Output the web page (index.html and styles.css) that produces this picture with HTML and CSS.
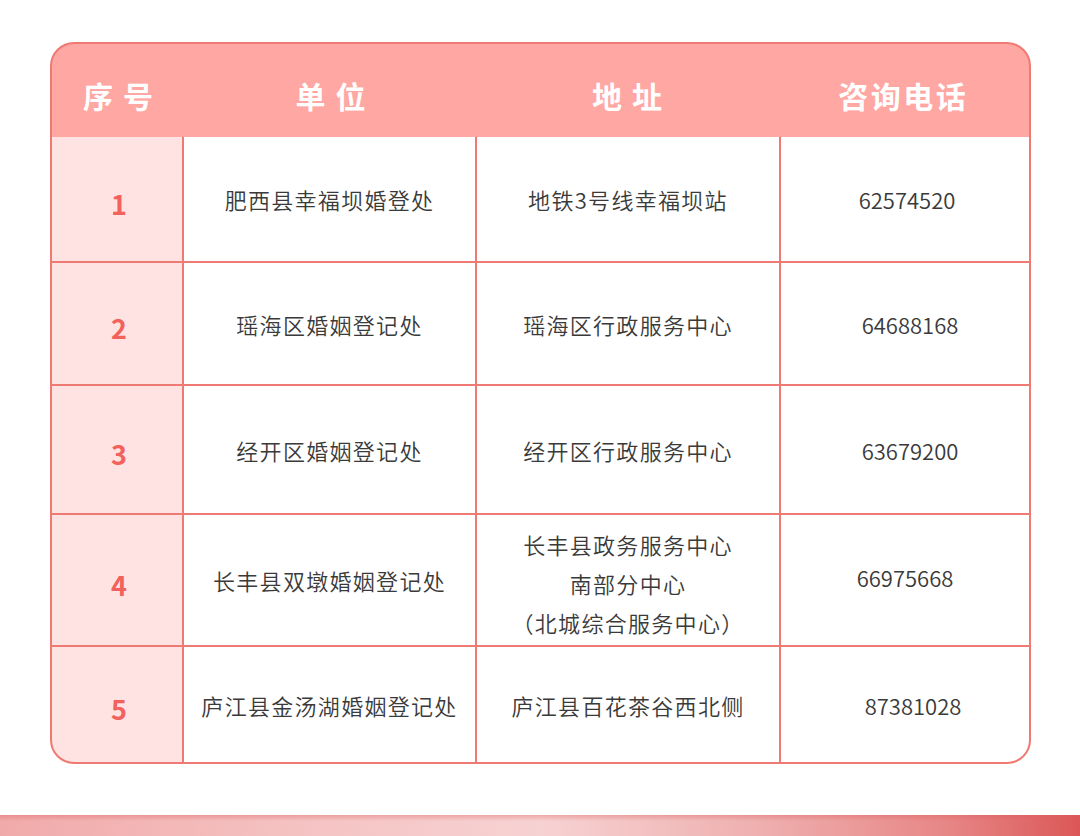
FILE: index.html
```html
<!DOCTYPE html>
<html lang="zh-CN">
<head>
<meta charset="utf-8">
<link rel="stylesheet" href="styles.css">
</head>
<body>
<div class="page">
  <div class="table">
    <div class="head">
      <div class="h c1"><span class="wide">序号</span></div>
      <div class="h c2"><span class="wide">单位</span></div>
      <div class="h c3"><span class="wide">地址</span></div>
      <div class="h c4"><span class="narrow">咨询电话</span></div>
    </div>
    <div class="body">
      <div class="cell num r1">1</div>
      <div class="cell r1">肥西县幸福坝婚登处</div>
      <div class="cell r1">地铁3号线幸福坝站</div>
      <div class="cell tel r1">62574520</div>

      <div class="cell num r2">2</div>
      <div class="cell r2">瑶海区婚姻登记处</div>
      <div class="cell r2">瑶海区行政服务中心</div>
      <div class="cell tel shift-r r2">64688168</div>

      <div class="cell num r3">3</div>
      <div class="cell r3">经开区婚姻登记处</div>
      <div class="cell r3">经开区行政服务中心</div>
      <div class="cell tel shift-r r3">63679200</div>

      <div class="cell num r4">4</div>
      <div class="cell r4">长丰县双墩婚姻登记处</div>
      <div class="cell r4 multi">长丰县政务服务中心<br>南部分中心<br>（北城综合服务中心）</div>
      <div class="cell tel up r4">66975668</div>

      <div class="cell num r5">5</div>
      <div class="cell r5">庐江县金汤湖婚姻登记处</div>
      <div class="cell r5">庐江县百花茶谷西北侧</div>
      <div class="cell tel shift-rr r5">87381028</div>
    </div>
  </div>
  <div class="strip"></div>
</div>
</body>
</html>
```
FILE: styles.css
```css
html, body {
  margin: 0;
  padding: 0;
  background: #ffffff;
}
.page {
  width: 1080px;
  height: 836px;
  position: relative;
  overflow: hidden;
  font-family: "Noto Sans CJK SC", "Noto Sans", sans-serif;
  padding-top: 42px;
  box-sizing: border-box;
}
.table {
  margin-left: 50px;
  width: 981px;
  box-sizing: border-box;
  border: 2px solid #ef7a73;
  border-radius: 24px;
  overflow: hidden;
  background: #ef7a73;
}
.head {
  display: grid;
  grid-template-columns: 132px 293px 304px 248px;
  height: 93px;
  background: #ffa7a3;
}
.h {
  display: flex;
  align-items: center;
  justify-content: center;
  color: #ffffff;
  font-weight: 700;
  font-size: 30px;
  padding-top: 8px;
  box-sizing: border-box;
}
.h.c3 {
  padding-right: 4px;
}
.h.c4 {
  padding-right: 6px;
}
.h .wide {
  letter-spacing: 10px;
  margin-right: -10px;
}
.h .narrow {
  letter-spacing: 2.5px;
  margin-right: -2.5px;
}
.body {
  display: grid;
  grid-template-columns: 130px 291px 302px 248px;
  grid-template-rows: 124px 121px 127px 130px 115px;
  column-gap: 2px;
  row-gap: 2px;
}
.cell {
  background: #ffffff;
  display: flex;
  align-items: center;
  justify-content: center;
  text-align: center;
  color: #3a3a3a;
  font-size: 22px;
  font-weight: 350;
  letter-spacing: 1.3px;
  box-sizing: border-box;
}
.cell.num {
  background: #ffe3e2;
  color: #f2615c;
  font-weight: 700;
  font-size: 27px;
  letter-spacing: 0;
  padding-top: 8px;
  padding-left: 4px;
}
.cell.tel {
  letter-spacing: 0;
  padding-left: 4px;
}
.cell.shift-r {
  padding-left: 10px;
}
.cell.shift-rr {
  padding-left: 16px;
}
.cell.up {
  padding-bottom: 6px;
  padding-left: 0;
}
.cell.multi {
  line-height: 39px;
  padding-top: 7px;
}
.strip {
  position: absolute;
  left: 0;
  right: 0;
  top: 815px;
  height: 21px;
  background:
    linear-gradient(180deg, rgba(220, 90, 90, 0.35) 0px, rgba(255, 255, 255, 0) 6px),
    linear-gradient(90deg, #f1aaaa 0%, #f5c4c4 30%, #f7d2d2 50%, #efb0b0 70%, #e78585 88%, #db5757 100%);
}
```
